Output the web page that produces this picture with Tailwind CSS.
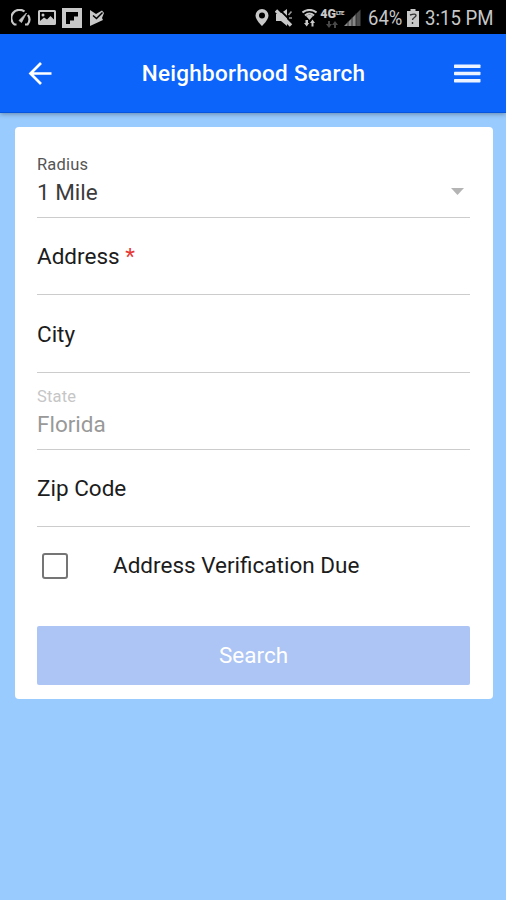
<!DOCTYPE html>
<html lang="en">
<head>
<meta charset="utf-8">
<title>Neighborhood Search</title>
<script src="https://cdn.jsdelivr.net/npm/@tailwindcss/browser@4"></script>
</head>
<body class="w-[506px] h-[900px] overflow-hidden bg-[#99cbff] font-['Roboto',sans-serif] flex flex-col">
  <div class="h-[34px] shrink-0 bg-black text-[#c8c8c8] flex items-center justify-between pl-[11px] pr-[13px]">
    <div class="flex items-center gap-[7px] pt-[1px]">
      <svg class="w-[20px] h-[18px]" viewBox="0 0 20 18" fill="none" stroke="currentColor" stroke-width="2.200"><path d="M5.500 15.500H3.500A8 8 0 0 1 13.500 2.500M17 6A8 8 0 0 1 16.500 15.500H14"/><path d="M8 11.500L15.500 4l-5 9.500z" fill="currentColor" stroke-width=".8"/></svg>
      <svg class="w-[18px] h-[18px]" viewBox="0 0 18 18"><path fill="currentColor" fill-rule="evenodd" d="M1.500 1h15a1.500 1.500 0 0 1 1.500 1.500v12a1.500 1.500 0 0 1-1.500 1.500h-15A1.500 1.500 0 0 1 0 14.500v-12A1.500 1.500 0 0 1 1.500 1zM2 3v9l4-3.500 3 2L12.500 7l3.500 3.500V3zM5 4.500a1.500 1.500 0 1 1 0 3 1.500 1.500 0 0 1 0-3z"/></svg>
      <svg class="w-[20px] h-[20px] -ml-[1px]" viewBox="0 0 20 20"><path fill="currentColor" d="M0 0h20v20H0z"/><path fill="#000" d="M4 4h12v4.500h-4v4H8V16H4z"/></svg>
      <svg class="w-[16px] h-[18px]" viewBox="0 0 16 18"><path fill="currentColor" d="M1 1l6 4 6-3.500 2 2.500-2 5 1 2L1 17z"/><path d="M4 6.500l3.500 3L13.500 3.500" fill="none" stroke="#000" stroke-width="1.500"/></svg>
    </div>
    <div class="flex items-center">
      <svg class="w-[14px] h-[19px] mr-[6px]" viewBox="0 0 14 19"><path fill="currentColor" fill-rule="evenodd" d="M7 1a6.500 6.500 0 0 1 6.500 6.500C13.500 12 7 18 7 18S.5 12 .5 7.500A6.500 6.500 0 0 1 7 1zm0 3.500a3 3 0 1 0 0 6 3 3 0 0 0 0-6z"/></svg>
      <svg class="w-[18px] h-[18px] mr-[9px] mt-[1px]" viewBox="0 0 18 18"><path fill="currentColor" d="M1 5h4l7-5v17l-6-5H1z"/><path d="M4 0l14 14" stroke="#000" stroke-width="1.800"/><path d="M1 1.500L16 16.500" stroke="currentColor" stroke-width="3.400"/><path d="M13.500 6l3-3.500M14 9h3" stroke="#999" stroke-width="1.600"/></svg>
      <svg class="w-[15px] h-[18px] mr-[4px] mt-[1px]" viewBox="0 0 15 18"><path d="M.5 3.500C4.500 0 10.500 0 14.500 3.500M3 6.500q4.500-4 9 0" fill="none" stroke="currentColor" stroke-width="2"/><path fill="currentColor" d="M4 7q3.500-2.500 7 0l-3.500 4zM2 14h1.500v-3H6v3h1.200l-2.500 3.500zM8 14l2.500-3.500L13 14h-1.500v3.500h-2V14z"/></svg>
      <div class="w-[22px] h-[19px] flex flex-col items-center mt-[2px]">
        <div class="flex items-start font-black whitespace-nowrap leading-[10px]"><span class="text-[12.500px]">4G</span><span class="text-[6px] leading-[7px] tracking-[-0.700px]">LTE</span></div>
        <svg class="w-[12px] h-[7px] mt-[2px]" viewBox="0 0 12 7"><path fill="#484848" d="M2 0h2v3h2L3 7 0 3h2zM8 7h2V4h2L9 0 6 4h2z"/></svg>
      </div>
      <svg class="w-[17px] h-[18px] ml-[1px] mr-[7px] mt-[1px]" viewBox="0 0 17 18"><path fill="#888" d="M0 17L12 5v12z"/><path fill="#4c4c4c" d="M12 5l4.500-4.500V17H12z"/><path d="M4 12v5M8 8v9M12 4v13" stroke="#222" stroke-width=".8"/></svg>
      <span class="w-[35px] mr-[4px] mt-[4px]"><span class="inline-block origin-left scale-x-[0.880] text-[21px] leading-[24px]">64%</span></span>
      <svg class="w-[12px] h-[18px] mr-[6px] mt-[1px]" viewBox="0 0 12 18"><path fill="currentColor" d="M3.500 0h5v2H12v16H0V2h3.500z"/><path d="M3 6q6-2 6 .5c0 2-3.500 2-3.500 4.500M5.500 13v2" fill="none" stroke="#333" stroke-width="1.400"/></svg>
      <span class="w-[68px] whitespace-nowrap mt-[4px]"><span class="inline-block origin-left scale-x-[0.885] text-[21px] leading-[24px]">3:15 PM</span></span>
    </div>
  </div>

  <header class="h-[79px] shrink-0 bg-[#0c64fb] border-b border-[#0755dc] text-white flex items-center justify-between pl-[28px] pr-[25px] shadow-[0_1px_5px_rgba(0,0,0,0.350)]">
    <svg class="w-[24px] h-[24px]" viewBox="0 0 24 24" fill="none" stroke="currentColor" stroke-width="2.700"><path d="M23.500 12.500H3M13 2L2.500 12.500 13 23"/></svg>
    <h1 class="text-[22.500px] leading-[28px] font-medium whitespace-nowrap tracking-[0.270px] ml-[2px]">Neighborhood Search</h1>
    <svg class="w-[28px] h-[20px]" viewBox="0 0 28 20" fill="#eef4ff"><rect x="1" y="1.500" width="26.500" height="3.600" rx=".7"/><rect x="1" y="8.700" width="26.500" height="3.600" rx=".7"/><rect x="1" y="15.900" width="26.500" height="3.600" rx=".7"/></svg>
  </header>

  <main class="mt-[14px] ml-[14.500px] w-[478px] h-[572px] bg-white rounded-[4px] px-[22.500px] pt-[13.500px] text-[22.500px] leading-[28px] text-[#1c1c1c]">
    <div class="h-[77.400px] border-b-[1.500px] border-[#cccccc] pt-[14px]">
      <div class="text-[16.500px] leading-[20px] text-[#555] tracking-[0.200px]">Radius</div>
      <div class="flex items-center justify-between pr-[6px] mt-[3px]">
        <span class="text-[#3c3c3c]">1 Mile</span>
        <svg class="w-[13px] h-[7px]" viewBox="0 0 13 7"><path d="M0 0h13L6.500 7z" fill="#b4b4b4"/></svg>
      </div>
    </div>
    <div class="h-[77.400px] border-b-[1.500px] border-[#cccccc] pt-[24.500px]">Address <span class="text-[#e53935]">*</span></div>
    <div class="h-[77.400px] border-b-[1.500px] border-[#cccccc] pt-[24.500px]">City</div>
    <div class="h-[77.400px] border-b-[1.500px] border-[#cccccc] pt-[14px]">
      <div class="text-[16.500px] leading-[20px] text-[#c6c6c6] tracking-[0.200px]">State</div>
      <div class="text-[#999] mt-[3px]">Florida</div>
    </div>
    <div class="h-[77.400px] border-b-[1.500px] border-[#cccccc] pt-[24px]">Zip Code</div>
    <label class="h-[78px] flex items-center pl-[5px]">
      <span class="w-[26px] h-[26px] border-[2.500px] border-[#757575] rounded-[3px]"></span>
      <span class="ml-[45px] whitespace-nowrap -mt-[2px]">Address Verification Due</span>
    </label>
    <button class="block w-full h-[58.500px] mt-[21px] pb-[2px] bg-[#adc5f4] rounded-[2px] text-white">Search</button>
  </main>
</body>
</html>
